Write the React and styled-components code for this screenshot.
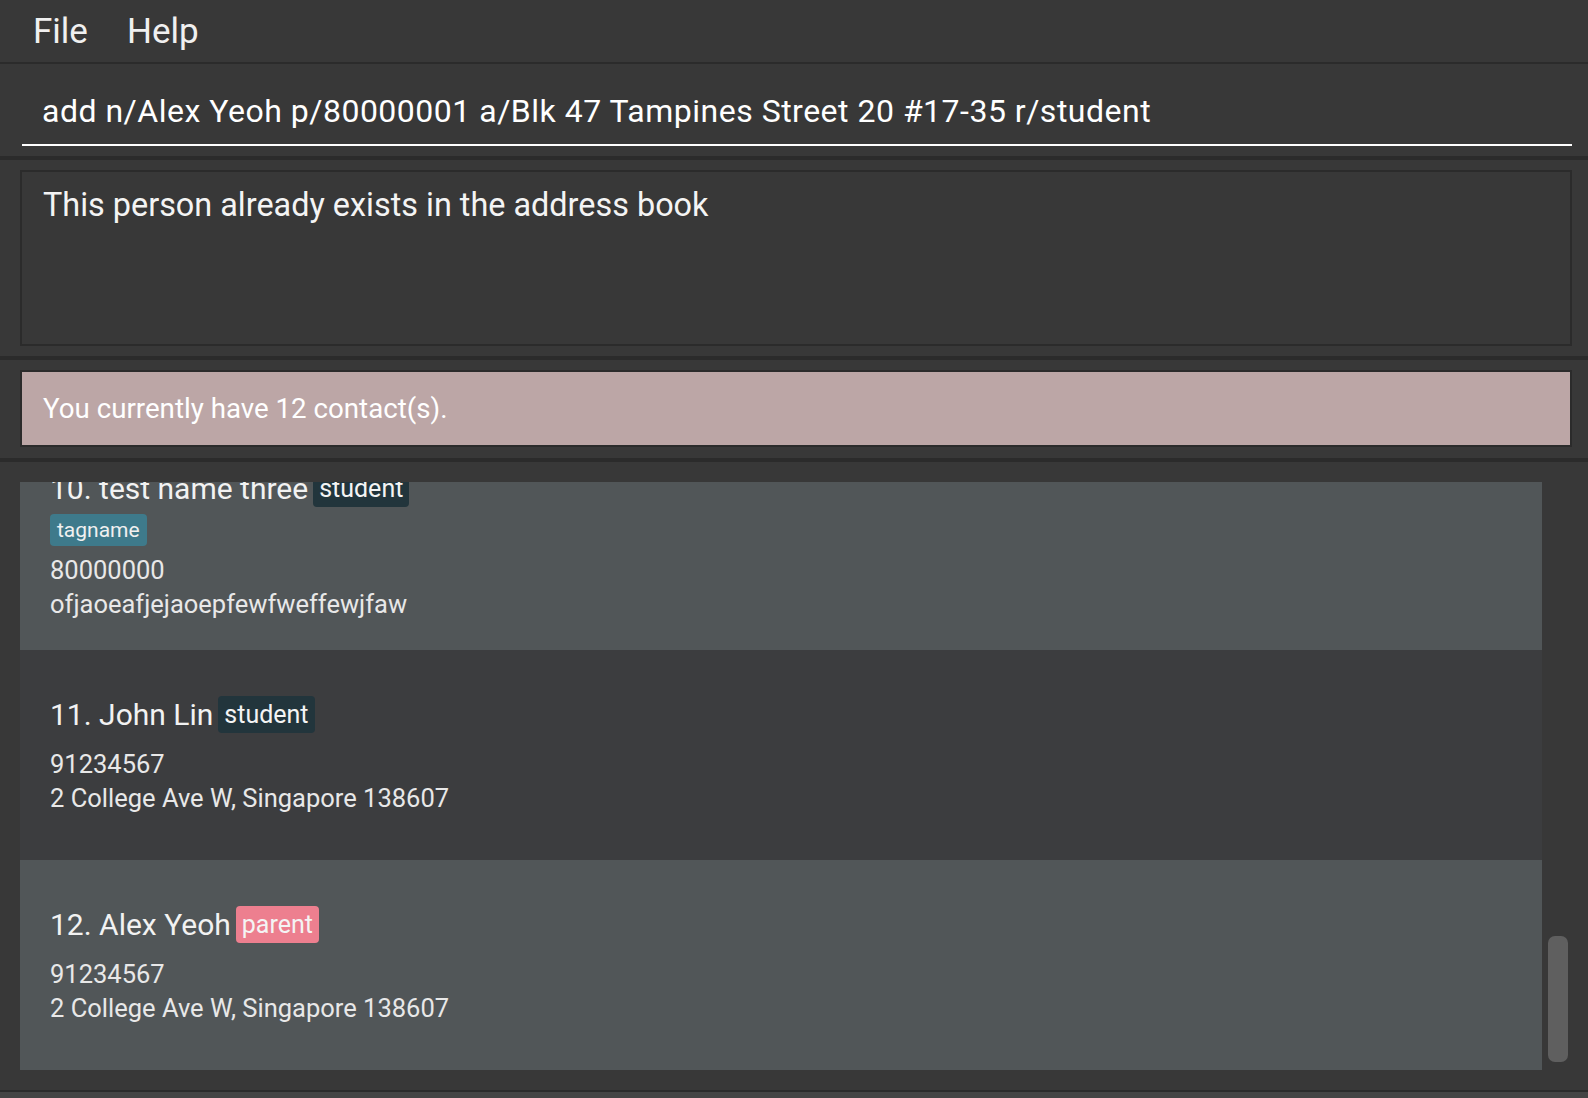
import React, { useLayoutEffect, useRef, useState } from "react";
import styled, { createGlobalStyle } from "styled-components";

const GlobalStyle = createGlobalStyle`
  html, body {
    margin: 0;
    padding: 0;
    background: #383838;
  }
  body {
    font-family: Roboto, "Liberation Sans", sans-serif;
    overflow: hidden;
  }
  * {
    box-sizing: border-box;
  }
`;

const contacts = [
  { name: "Bernice Yu", role: "student", tags: [], phone: "99272758", address: "Blk 30 Lorong 3 Serangoon Gardens, #07-18" },
  { name: "Charlotte Oliveiro", role: "parent", tags: [], phone: "93210283", address: "Blk 11 Ang Mo Kio Street 74, #11-04" },
  { name: "David Li", role: "student", tags: [], phone: "91031282", address: "Blk 436 Serangoon Gardens Street 26, #16-43" },
  { name: "Irfan Ibrahim", role: "parent", tags: [], phone: "92492021", address: "Blk 47 Tampines Street 20, #17-35" },
  { name: "Roy Balakrishnan", role: "student", tags: [], phone: "92624417", address: "Blk 45 Aljunied Street 85, #11-31" },
  { name: "test name one", role: "student", tags: [], phone: "80000002", address: "abcdefg" },
  { name: "test name two", role: "parent", tags: [], phone: "80000003", address: "hijklmn" },
  { name: "Jane Tan", role: "student", tags: [], phone: "81234567", address: "1 Kent Ridge Rd, Singapore 119224" },
  { name: "Mary Lim", role: "parent", tags: [], phone: "87654321", address: "21 Lower Kent Ridge Rd, Singapore 119077" },
  { name: "test name three", role: "student", tags: ["tagname"], phone: "80000000", address: "ofjaoeafjejaoepfewfweffewjfaw" },
  { name: "John Lin", role: "student", tags: [], phone: "91234567", address: "2 College Ave W, Singapore 138607" },
  { name: "Alex Yeoh", role: "parent", tags: [], phone: "91234567", address: "2 College Ave W, Singapore 138607" },
];

const roleColors = {
  student: "#22353c",
  parent: "#ed7f8f",
};

const Window = styled.div`
  display: flex;
  flex-direction: column;
  width: 100%;
  height: 100vh;
  background: #383838;
  color: #f2f2f2;
`;

const MenuBar = styled.div`
  display: flex;
  align-items: center;
  gap: 39px;
  height: 62px;
  flex-shrink: 0;
  padding-left: 33px;
  font-size: 35px;
  color: #f0f0f0;
`;

const Divider = styled.div`
  height: ${(p) => p.$size}px;
  flex-shrink: 0;
  background: #2b2b2b;
`;

const CommandPane = styled.div`
  height: 92px;
  flex-shrink: 0;
  padding: 14px 16px 10px 22px;
`;

const CommandInput = styled.input`
  display: block;
  width: 100%;
  height: 68px;
  padding: 0 0 0 20px;
  background: transparent;
  border: none;
  border-bottom: 2px solid #ffffff;
  outline: none;
  color: #ffffff;
  font-family: inherit;
  font-size: 32px;
  letter-spacing: 0.5px;
`;

const ResultPane = styled.div`
  height: 196px;
  flex-shrink: 0;
  padding: 10px 16px 10px 20px;
`;

const ResultBox = styled.div`
  height: 100%;
  padding: 14px 21px;
  border: 2px solid #2b2b2b;
  font-size: 32.4px;
  color: #f4f4f4;
`;

const StatusPane = styled.div`
  height: 98px;
  flex-shrink: 0;
  padding: 10px 16px 11px 20px;
`;

const StatusBox = styled.div`
  display: flex;
  align-items: center;
  height: 100%;
  padding-left: 21px;
  border: 2px solid #2b2b2b;
  background: #bca6a6;
  font-size: 27.7px;
  color: #ffffff;
`;

const ListPane = styled.div`
  display: flex;
  height: 628px;
  flex-shrink: 0;
  padding: 20px 16px 20px 20px;
`;

const ListView = styled.div`
  flex: 1;
  min-width: 0;
  height: 100%;
  overflow-y: auto;
  scrollbar-width: none;

  &::-webkit-scrollbar {
    display: none;
  }
`;

const ScrollTrack = styled.div`
  display: flex;
  flex-direction: column;
  width: 30px;
  flex-shrink: 0;
  padding: 40px 4px 8px 6px;
`;

const ScrollThumb = styled.div`
  flex-shrink: 0;
  border-radius: 7px;
  background: #5f5f5f;
`;

const Card = styled.div`
  display: flex;
  flex-direction: column;
  justify-content: center;
  gap: 7px;
  min-height: 210px;
  padding: 0 30px;
  background: ${(p) => (p.$light ? "#515658" : "#3c3d3f")};
`;

const NameRow = styled.div`
  display: flex;
  align-items: center;
  gap: 5px;
  height: 37px;
  font-size: 30px;
  color: #f2f2f2;
`;

const RoleTag = styled.span`
  display: flex;
  align-items: center;
  height: 37px;
  padding: 0 6px;
  border-radius: 4px;
  background: ${(p) => roleColors[p.$role]};
  font-size: 25px;
  color: #f4f4f4;
`;

const TagRow = styled.div`
  display: flex;
  flex-wrap: wrap;
  gap: 6px;
`;

const Tag = styled.span`
  display: flex;
  align-items: center;
  height: 32px;
  padding: 0 7px;
  border-radius: 4px;
  background: #3e7a8b;
  font-size: 21px;
  color: #f0f0f0;
`;

const Details = styled.div`
  display: flex;
  flex-direction: column;
  font-size: 25.5px;
  line-height: 34px;
  color: #e8e8e8;
`;

const Footer = styled.div`
  flex: 1;
  background: #444444;
`;

function ContactCard({ index, contact }) {
  return (
    <Card $light={index % 2 === 1}>
      <NameRow>
        <span>
          {index + 1}. {contact.name}
        </span>
        <RoleTag $role={contact.role}>{contact.role}</RoleTag>
      </NameRow>
      <TagRow>
        {contact.tags.map((t) => (
          <Tag key={t}>{t}</Tag>
        ))}
      </TagRow>
      <Details>
        <span>{contact.phone}</span>
        <span>{contact.address}</span>
      </Details>
    </Card>
  );
}

function PersonList({ items }) {
  const listRef = useRef(null);
  const [thumb, setThumb] = useState({ top: 0, height: 0 });

  useLayoutEffect(() => {
    const el = listRef.current;
    if (!el) return;
    el.scrollTop = el.scrollHeight;
    const track = el.clientHeight - 48;
    const height = (track * el.clientHeight) / el.scrollHeight;
    const range = el.scrollHeight - el.clientHeight;
    const top = range > 0 ? ((track - height) * el.scrollTop) / range : 0;
    setThumb({ top, height });
  }, [items]);

  return (
    <ListPane>
      <ListView ref={listRef}>
        {items.map((c, i) => (
          <ContactCard key={i} index={i} contact={c} />
        ))}
      </ListView>
      <ScrollTrack>
        <ScrollThumb style={{ marginTop: thumb.top, height: thumb.height }} />
      </ScrollTrack>
    </ListPane>
  );
}

export default function App() {
  return (
    <Window>
      <GlobalStyle />
      <MenuBar>
        <span>File</span>
        <span>Help</span>
      </MenuBar>
      <Divider $size={2} />
      <CommandPane>
        <CommandInput
          readOnly
          defaultValue="add n/Alex Yeoh p/80000001 a/Blk 47 Tampines Street 20 #17-35 r/student"
        />
      </CommandPane>
      <Divider $size={4} />
      <ResultPane>
        <ResultBox>This person already exists in the address book</ResultBox>
      </ResultPane>
      <Divider $size={4} />
      <StatusPane>
        <StatusBox>You currently have 12 contact(s).</StatusBox>
      </StatusPane>
      <Divider $size={4} />
      <PersonList items={contacts} />
      <Divider $size={2} />
      <Footer />
    </Window>
  );
}
